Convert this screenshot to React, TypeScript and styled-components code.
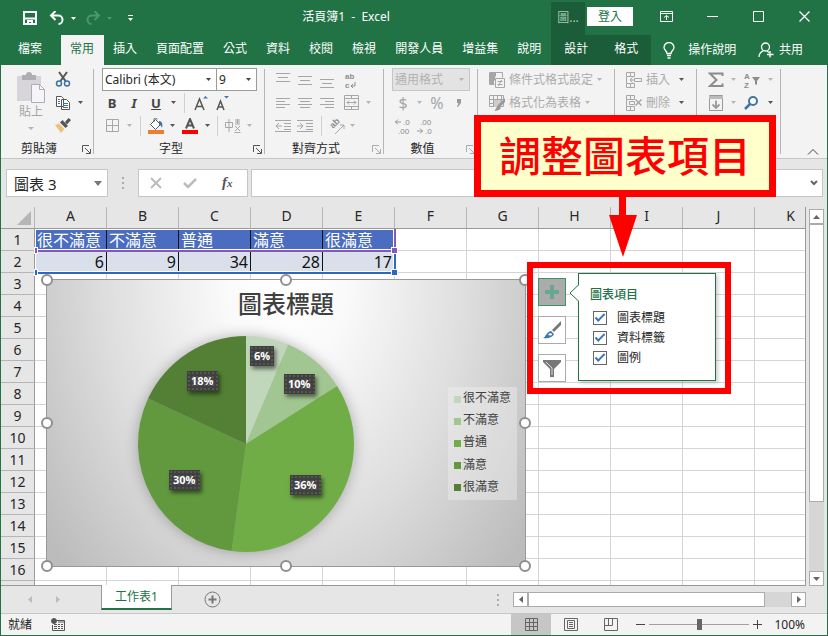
import React from "react";
import styled, { createGlobalStyle, css } from "styled-components";

const GREEN = "#217346";
const DARK_GREEN = "#1b5c39";
const UI_FONT = `"Noto Sans", "Noto Sans CJK TC", sans-serif`;

const GlobalStyle = createGlobalStyle`
  *, *::before, *::after { box-sizing: border-box; }
  html, body, #root { height: 100%; }
  body { margin: 0; font-family: ${UI_FONT}; font-size: 12px; line-height: 16px; color: #262626; }
  button, input, select { font: inherit; color: inherit; margin: 0; padding: 0; }
  button { border: 0; background: none; cursor: default; white-space: nowrap; }
  svg { display: block; flex: none; }
`;

/* ---------- window ---------- */

const Window = styled.div`
  position: relative;
  display: flex;
  flex-direction: column;
  height: 100vh;
  min-height: 420px;
  overflow: hidden;
  background: #e6e6e6;
  border: 1px solid ${GREEN};
  border-top: 0;
`;

const TitleBar = styled.header`
  display: flex;
  flex: none;
  height: 35px;
  background: ${GREEN};
  color: #fff;
`;

const QuickAccess = styled.div`
  display: flex;
  align-items: center;
  width: 140px;
  padding-left: 18px;
`;

const Title = styled.h1`
  flex: 1;
  margin: 0;
  font-size: 12px;
  line-height: 33px;
  font-weight: 400;
  text-align: center;
  white-space: pre;
`;

const ContextTitle = styled.div`
  width: 34px;
  margin-top: 2px;
  background: ${DARK_GREEN};
  color: #a5cdb5;
  line-height: 32px;
  text-align: center;
`;

const SignIn = styled.button`
  align-self: center;
  width: 46px;
  height: 19px;
  margin: 0 10px 2px 2px;
  background: #fff;
  color: ${GREEN};
`;

const WindowButton = styled.button`
  display: grid;
  place-items: center;
  width: 46px;
  height: 32px;
`;

const TabStrip = styled.nav`
  display: flex;
  flex: none;
  height: 30px;
  background: ${GREEN};
  color: #fff;
`;

const RibbonTab = styled.button<{ $kind?: "file" | "active" | "context" }>`
  height: 30px;
  padding: 0 10px 2px 9px;
  ${(p) => p.$kind === "file" && css`padding: 0 19px 2px 17px;`}
  ${(p) => p.$kind === "active" && css`background: #f3f3f3; color: ${GREEN};`}
  ${(p) => p.$kind === "context" && css`background: ${DARK_GREEN}; padding: 0 13px 2px;`}
`;

const TabAction = styled.button`
  display: flex;
  align-items: center;
  gap: 5px;
  height: 30px;
`;

const TellMe = styled(TabAction)`
  gap: 13px;
  margin-left: 12px;
`;

const Share = styled(TabAction)`
  margin: 0 24px 0 auto;
`;

/* ---------- ribbon ---------- */

const Ribbon = styled.section`
  display: flex;
  flex: none;
  height: 94px;
  background: #f3f3f3;
  border-bottom: 1px solid #c6c6c6;
`;

const Group = styled.section<{ $w: number }>`
  position: relative;
  display: grid;
  grid-template-rows: 23px 23px 23px 1fr;
  flex: none;
  width: ${(p) => p.$w}px;
  padding-top: 3px;
  &::after {
    content: "";
    position: absolute;
    right: 0;
    top: 4px;
    bottom: 4px;
    width: 1px;
    background: #b5b5b5;
  }
`;

const Row = styled.div<{ $pad?: number }>`
  display: flex;
  align-items: center;
  padding-left: ${(p) => p.$pad ?? 0}px;
`;

const GroupFooter = styled.div`
  grid-row: 4;
  display: flex;
  align-items: center;
  padding: 3px 3px 0 0;
`;

const GroupName = styled.h2`
  flex: 1;
  margin: 0 5px 0 0;
  font-size: 12px;
  line-height: 18px;
  font-weight: 400;
  text-align: center;
`;

const Tool = styled.button<{ $w?: number; $dim?: boolean }>`
  display: flex;
  align-items: center;
  justify-content: center;
  flex: none;
  width: ${(p) => p.$w ?? 22}px;
  height: 22px;
  color: ${(p) => (p.$dim ? "#a6a6a6" : "#444")};
`;

const Glyph = styled(Tool)<{ $bold?: boolean; $italic?: boolean; $under?: boolean }>`
  font-size: 13px;
  line-height: 16px;
  font-weight: ${(p) => (p.$bold ? 700 : 400)};
  font-style: ${(p) => (p.$italic ? "italic" : "normal")};
  text-decoration: ${(p) => (p.$under ? "underline" : "none")};
`;

const NumberGlyph = styled(Tool)`
  font-size: 16px;
`;

const Separator = styled.span`
  flex: none;
  width: 1px;
  height: 20px;
  margin: 0 5px;
  background: #d0d0d0;
`;

const Clipboard = styled.div`
  grid-row: 1 / 4;
  display: flex;
`;

const PasteButton = styled.button`
  display: flex;
  flex-direction: column;
  align-items: center;
  width: 34px;
  margin: 4px 4px 0 13px;
  color: #a6a6a6;
`;

const ClipboardTools = styled.div`
  display: grid;
  grid-template-rows: repeat(3, 23px);
`;

const Combo = styled.label<{ $w: number; $dim?: boolean }>`
  position: relative;
  display: flex;
  align-items: center;
  flex: none;
  width: ${(p) => p.$w}px;
  height: 23px;
  border: 1px solid ${(p) => (p.$dim ? "#c6c6c6" : "#9a9a9a")};
  background: ${(p) => (p.$dim ? "#e3e3e3" : "#fff")};
  color: ${(p) => (p.$dim ? "#b1b1b1" : "#262626")};
  & + & { margin-left: -1px; }
  > svg { position: absolute; right: 5px; pointer-events: none; }
`;

const ComboSelect = styled.select`
  appearance: none;
  width: 100%;
  height: 100%;
  padding-left: 2px;
  border: 0;
  background: transparent;
`;

const TextTool = styled.button`
  display: flex;
  align-items: center;
  gap: 4px;
  height: 22px;
  color: #ababab;
`;

const Collapse = styled.button`
  align-self: flex-end;
  margin: 0 8px 2px auto;
`;

/* ---------- formula bar ---------- */

const FormulaBar = styled.section`
  display: flex;
  align-items: center;
  flex: none;
  height: 48px;
  padding: 0 4px 0 5px;
`;

const NameBox = styled.label`
  position: relative;
  display: flex;
  align-items: center;
  width: 102px;
  height: 28px;
  border: 1px solid #c6c6c6;
  background: #fff;
  > svg { position: absolute; right: 5px; }
`;

const NameInput = styled.input`
  width: 100%;
  height: 26px;
  padding-left: 7px;
  border: 0;
  background: transparent;
  font-size: 15px;
`;

const Grip = styled.span`
  display: grid;
  place-items: center;
  width: 30px;
`;

const FormulaButtons = styled.div`
  display: flex;
  align-items: center;
  justify-content: space-around;
  width: 110px;
  height: 28px;
  margin-right: 3px;
  border: 1px solid #c6c6c6;
  background: #fff;
`;

const FormulaField = styled.label`
  display: flex;
  align-items: center;
  flex: 1;
  height: 28px;
  padding-right: 4px;
  border: 1px solid #c6c6c6;
  background: #fff;
`;

const FormulaInput = styled.input`
  flex: 1;
  min-width: 0;
  border: 0;
  background: transparent;
`;

/* ---------- sheet ---------- */

const SheetArea = styled.main`
  display: flex;
  flex: 1;
  min-height: 0;
`;

const SheetFrame = styled.div`
  position: relative;
  flex: 1;
  min-width: 0;
  overflow: hidden;
  background: #fff;
  border: solid #999;
  border-width: 0 1px 1px 0;
`;

const Grid = styled.table`
  table-layout: fixed;
  width: 826px;
  border-spacing: 0;
  font-size: 16px;
  line-height: 20px;
`;

const ColHead = styled.th`
  height: 22px;
  padding: 0;
  background: #e6e6e6;
  border-right: 1px solid #b5b5b5;
  border-bottom: 1px solid #999;
  font-size: 14px;
  line-height: 18px;
  font-weight: 400;
  vertical-align: top;
`;

const Corner = styled(ColHead)`
  > svg { margin: 4px 3px 0 auto; }
`;

const RowHead = styled.th`
  height: 22px;
  padding: 1px 0 0;
  background: #e6e6e6;
  border-right: 1px solid #999;
  border-bottom: 1px solid #b5b5b5;
  font-size: 14px;
  line-height: 20px;
  font-weight: 400;
`;

const Cell = styled.td<{ $kind?: "label" | "value" }>`
  height: 22px;
  padding: 1px 2px 0;
  overflow: hidden;
  white-space: nowrap;
  border-right: 1px solid #d4d4d4;
  border-bottom: 1px solid #d4d4d4;
  ${(p) => p.$kind && css`border-right-color: #111;`}
  ${(p) => p.$kind === "label" && css`background: #4a6cc1; color: #fff;`}
  ${(p) => p.$kind === "value" && css`background: #dae0eb; color: #111; text-align: right;`}
`;

const RangeOutline = styled.div<{ $color: string; $top: number }>`
  position: absolute;
  left: 34px;
  top: ${(p) => p.$top}px;
  width: 361px;
  height: 23px;
  border: solid ${(p) => p.$color};
  border-width: 0 2px 2px 0;
  box-shadow: inset -1px -1px #fff, inset 1px 1px #fff;
  &::before, &::after {
    content: "";
    position: absolute;
    bottom: -3px;
    width: 5px;
    height: 5px;
    background: ${(p) => p.$color};
    outline: 1px solid #fff;
  }
  &::before { left: 0; width: 2px; }
  &::after { right: -3px; }
`;

const Chart = styled.figure`
  position: absolute;
  left: 45px;
  top: 72px;
  width: 480px;
  height: 288px;
  margin: 0;
  border: 1px solid #999;
  background: radial-gradient(ellipse 300px 420px at 50% 0, #fff 0, #fafafa 20%, #dedede 60%, #c6c6c6 88%, #bcbcbc 100%);
  color: #404040;
`;

const ChartTitle = styled.figcaption`
  padding-top: 8px;
  font-size: 24px;
  line-height: 32px;
  font-weight: 500;
  text-align: center;
`;

const PlotArea = styled.svg`
  position: absolute;
  left: 75px;
  top: 39px;
  overflow: visible;
  filter: drop-shadow(0 0 7px rgba(0, 0, 0, 0.28));
`;

const DataLabel = styled.span<{ $x: number; $y: number }>`
  position: absolute;
  left: ${(p) => p.$x}px;
  top: ${(p) => p.$y}px;
  padding: 0 4px;
  background: radial-gradient(#565656 1px, transparent 1px) 0 0 / 4px 4px #404040;
  box-shadow: 2px 3px 4px rgba(0, 0, 0, 0.5);
  color: #fff;
  font-family: "Open Sans", sans-serif;
  font-size: 11px;
  line-height: 20px;
  font-weight: 700;
`;

const Legend = styled.ul`
  position: absolute;
  right: 8px;
  top: 107px;
  display: grid;
  grid-auto-rows: 1fr;
  width: 69px;
  height: 113px;
  margin: 0;
  padding: 0 0 2px 6px;
  list-style: none;
  background: rgba(242, 242, 242, 0.4);
`;

const LegendItem = styled.li<{ $color: string }>`
  display: flex;
  align-items: center;
  gap: 2px;
  white-space: nowrap;
  &::before {
    content: "";
    width: 7px;
    height: 7px;
    margin-top: 2px;
    background: ${(p) => p.$color};
  }
`;

const Handle = styled.span<{ $x: string; $y: string }>`
  position: absolute;
  left: ${(p) => p.$x};
  top: ${(p) => p.$y};
  width: 12px;
  height: 12px;
  margin: -6px;
  border: 2px solid #8f8f8f;
  border-radius: 50%;
  background: #fff;
`;

const ChartButtons = styled.div`
  position: absolute;
  left: 537px;
  top: 71px;
  display: grid;
  gap: 10px;
`;

const ChartButton = styled.button<{ $on?: boolean }>`
  display: grid;
  place-items: center;
  width: 28px;
  height: 28px;
  border: 1px solid ${(p) => (p.$on ? "#3b9464" : "#ababab")};
  background: ${(p) => (p.$on ? "#ababab" : "#fff")};
`;

const Popup = styled.fieldset`
  position: absolute;
  left: 577px;
  top: 66px;
  width: 138px;
  height: 108px;
  margin: 0;
  padding: 13px 11px;
  border: 1px solid ${GREEN};
  background: #fff;
  box-shadow: 2px 2px 4px rgba(0, 0, 0, 0.2);
  > svg { position: absolute; left: -10px; top: 9px; }
`;

const PopupTitle = styled.strong`
  display: block;
  margin-bottom: 5px;
  color: ${GREEN};
  line-height: 16px;
  font-weight: 500;
`;

const CheckRow = styled.label`
  display: flex;
  align-items: center;
  gap: 10px;
  height: 20px;
  padding-left: 3px;
`;

const CheckBox = styled.input`
  appearance: none;
  display: grid;
  place-items: center;
  width: 14px;
  height: 14px;
  border: 1px solid #666;
  background: #fff;
  &:checked::before {
    content: "";
    width: 10px;
    height: 5px;
    margin-top: -3px;
    border: solid #3f74b5;
    border-width: 0 0 2px 2px;
    transform: rotate(-45deg);
  }
`;

/* ---------- scroll bars ---------- */

const VScroll = styled.div`
  display: flex;
  flex-direction: column;
  flex: none;
  width: 15px;
  margin: 2px 3px 0;
  background: #d6d6d6;
`;

const HScroll = styled.div`
  display: flex;
  width: 293px;
  height: 15px;
  background: #d6d6d6;
`;

const ScrollButton = styled.button`
  display: grid;
  place-items: center;
  flex: none;
  width: 15px;
  height: 15px;
  border: 1px solid #ababab;
  background: #fff;
`;

const Thumb = styled.div<{ $grow: number }>`
  flex: 0 0 ${(p) => p.$grow}%;
  border: 1px solid #ababab;
  background: #fff;
`;

const ThumbTrack = styled.div<{ $vertical?: boolean }>`
  display: flex;
  flex: 1;
  flex-direction: ${(p) => (p.$vertical ? "column" : "row")};
`;

/* ---------- bottom bars ---------- */

const SheetTabs = styled.nav`
  display: flex;
  align-items: center;
  flex: none;
  height: 27px;
  padding-right: 21px;
`;

const SheetNav = styled.div`
  display: flex;
  width: 100px;
  padding-left: 15px;
`;

const SheetTab = styled.button`
  position: relative;
  align-self: flex-start;
  width: 71px;
  height: 25px;
  margin-top: -1px;
  border: solid #999;
  border-width: 0 1px;
  border-bottom: 2px solid ${GREEN};
  background: #fff;
  color: ${GREEN};
`;

const AddSheet = styled.button`
  margin-left: 32px;
`;

const TabGrip = styled(Grip)`
  margin-left: auto;
`;

const StatusBar = styled.footer`
  display: flex;
  align-items: center;
  flex: none;
  height: 22px;
  padding: 0 22px 0 7px;
  border-top: 1px solid #c6c6c6;
  background: #f3f3f3;
`;

const StatusText = styled.span`
  margin-right: 19px;
`;

const ViewButtons = styled.div`
  display: flex;
  align-self: stretch;
  margin: 0 5px 0 auto;
`;

const ViewButton = styled.button<{ $on?: boolean }>`
  display: grid;
  place-items: center;
  width: 40px;
  background: ${(p) => (p.$on ? "#c6c6c6" : "none")};
`;

const ZoomSlider = styled.input`
  appearance: none;
  width: 100px;
  height: 12px;
  margin: 0 4px;
  background: linear-gradient(#a0a0a0, #a0a0a0) center / 100% 1px no-repeat;
  &::-webkit-slider-thumb {
    appearance: none;
    width: 5px;
    height: 11px;
    background: #666;
  }
`;

const ZoomValue = styled.button`
  width: 43px;
  text-align: right;
`;

/* ---------- annotations ---------- */

const Callout = styled.div`
  position: absolute;
  left: 473px;
  top: 115px;
  padding: 0 18px;
  border: 7px solid #f00;
  background: #ffc;
  color: #f00;
  font-size: 42px;
  line-height: 68px;
  font-weight: 500;
  white-space: nowrap;
`;

const CalloutArrow = styled.svg`
  position: absolute;
  left: 607px;
  top: 196px;
`;

const Highlight = styled.div`
  position: absolute;
  left: 526px;
  top: 262px;
  width: 204px;
  height: 132px;
  border: 6px solid #f00;
  pointer-events: none;
`;

/* ---------- icons ---------- */

type IconProps = { w?: number; h?: number; c?: string; sw?: number; children: React.ReactNode };

const Icon = ({ w = 16, h = 16, c = "#a6a6a6", sw = 1, children }: IconProps) => (
  <svg width={w} height={h} viewBox={`0 0 ${w} ${h}`} fill="none" stroke={c} strokeWidth={sw} aria-hidden="true">
    {children}
  </svg>
);

const LetterIcon = ({ size = 8, bold, children }: { size?: number; bold?: boolean; children: React.ReactNode }) => (
  <svg
    width="20"
    height="20"
    viewBox="0 0 20 20"
    fill="#8c8c8c"
    fontFamily="Liberation Sans"
    fontSize={size}
    fontWeight={bold ? 700 : 400}
    aria-hidden="true"
  >
    {children}
  </svg>
);

const Caret = ({ c = "#666" }: { c?: string }) => (
  <svg width="5" height="3" viewBox="0 0 5 3" aria-hidden="true">
    <path d="M0 0h5L2.5 3z" fill={c} />
  </svg>
);

const Drop = ({ w = 12, dim }: { w?: number; dim?: boolean }) => (
  <Tool $w={w} aria-label="更多">
    <Caret c={dim ? "#b5b5b5" : "#555"} />
  </Tool>
);

const Launcher = ({ dim }: { dim?: boolean }) => (
  <button aria-label="對話方塊">
    <Icon w={9} h={9} c={dim ? "#ababab" : "#555"}>
      <path d="M.5 7V.5H7M3 3l5 5M8.500 4v4.500H4" />
    </Icon>
  </button>
);

const Lines = ({ rows, w = 14 }: { rows: [number, number, number][]; w?: number }) => (
  <Icon w={w} h={16}>
    {rows.map(([y, a, b]) => (
      <path key={y} d={`M${a} ${y + 0.5}H${b}`} />
    ))}
  </Icon>
);

const Dots = () => (
  <Icon w={3} h={12} c="none">
    <path d="M0 0h2v2H0zM0 5h2v2H0zM0 10h2v2H0z" fill="#ababab" />
  </Icon>
);

const TableIcon = () => (
  <path d="M.5.5h4v4h-4zM4.500.5h4v4h-4zM.5 11.500h4v4h-4zM4.500 11.500h4v4h-4zM.5 4.500v7" />
);

/* ---------- data ---------- */

const columns = ["A", "B", "C", "D", "E", "F", "G", "H", "I", "J", "K"];
const series = [
  { name: "很不滿意", value: 6, color: "#c1d7bb", label: "6%", x: 203, y: 66 },
  { name: "不滿意", value: 9, color: "#a2c691", label: "10%", x: 237, y: 94 },
  { name: "普通", value: 34, color: "#70ad47", label: "36%", x: 243, y: 195 },
  { name: "滿意", value: 28, color: "#62993e", label: "30%", x: 122, y: 190 },
  { name: "很滿意", value: 17, color: "#538034", label: "18%", x: 140, y: 91 },
];
const rows = Array.from({ length: 17 }, (_, i) => i + 1);
const total = series.reduce((sum, s) => sum + s.value, 0);

const slices = series.map((s, i) => {
  const before = series.slice(0, i).reduce((sum, p) => sum + p.value, 0);
  const point = (v: number) => {
    const a = (v / total) * Math.PI * 2;
    return `${124 + 108 * Math.sin(a)} ${125 - 108 * Math.cos(a)}`;
  };
  return {
    color: s.color,
    d: `M124 125L${point(before)}A108 108 0 0 1 ${point(before + s.value)}Z`,
  };
});

const mainTabs = ["插入", "頁面配置", "公式", "資料", "校閱", "檢視", "開發人員", "增益集", "說明"];
const chartElements = ["圖表標題", "資料標籤", "圖例"];

/* ---------- sections ---------- */

const Header = () => (
  <>
    <TitleBar>
      <QuickAccess>
        <Tool aria-label="儲存檔案">
          <Icon w={14} h={14} c="#fff" sw={2}>
            <path d="M1 1h12v12H1zM1 7.500h12M5 13v-3h4v3" />
          </Icon>
        </Tool>
        <Tool $w={43} aria-label="復原">
          <Icon w={16} h={14} c="#fff" sw={2}>
            <path d="M6.500 0L2 4.500 6.500 9M2 4.500h7a4.200 4.200 0 0 1 .5 8.500" />
          </Icon>
          <Icon w={12} h={14}><path d="M6 6h5L8.500 9z" fill="#fff" stroke="none" /></Icon>
        </Tool>
        <Tool $w={30} aria-label="取消復原">
          <Icon w={16} h={14} c="#4f9470" sw={2}>
            <path d="M9.500 0L14 4.500 9.500 9M14 4.500H7A4.200 4.200 0 0 0 6.500 13" />
          </Icon>
          <Icon w={12} h={14}><path d="M6 6h5L8.500 9z" fill="#4f9470" stroke="none" /></Icon>
        </Tool>
        <Tool $w={32} aria-label="自訂快速存取工具列">
          <Icon w={5} h={8} c="#fff"><path d="M0 1.500h5" /><path d="M0 4h5L2.500 7z" fill="#fff" stroke="none" /></Icon>
        </Tool>
      </QuickAccess>
      <Title>{"活頁簿1  -  Excel"}</Title>
      <ContextTitle>圖...</ContextTitle>
      <SignIn>登入</SignIn>
      <WindowButton aria-label="功能區顯示選項">
        <Icon w={13} h={11} c="#fff"><path d="M.5.5h12v10H.5zM.5 2.500h12M6.500 9V4.500M4 6.500l2.500-2 2.500 2" /></Icon>
      </WindowButton>
      <WindowButton aria-label="最小化"><Icon w={11} h={11} c="#fff"><path d="M0 5.500h11" /></Icon></WindowButton>
      <WindowButton aria-label="最大化"><Icon w={11} h={11} c="#fff"><path d="M.5.5h10v10H.5z" /></Icon></WindowButton>
      <WindowButton aria-label="關閉"><Icon w={11} h={11} c="#fff" sw={1.3}><path d="M.5.5l10 10M10.500.5l-10 10" /></Icon></WindowButton>
    </TitleBar>
    <TabStrip>
      <RibbonTab $kind="file">檔案</RibbonTab>
      <RibbonTab $kind="active">常用</RibbonTab>
      {mainTabs.map((t) => <RibbonTab key={t}>{t}</RibbonTab>)}
      <RibbonTab $kind="context">設計</RibbonTab>
      <RibbonTab $kind="context">格式</RibbonTab>
      <TellMe>
        <Icon w={12} h={17} c="#fff" sw={1.3}>
          <path d="M4 11.500C4 9 1 8 1 5.500a5 5 0 0 1 10 0C11 8 8 9 8 11.500zM4 13.500h4M4.500 16h3" />
        </Icon>
        操作說明
      </TellMe>
      <Share>
        <Icon w={16} h={16} c="#fff" sw={1.3}>
          <circle cx="7.500" cy="5" r="4" /><path d="M1 15c0-4 2-5.500 5-6.500M9 9l2 1.500M12 9v6.500M9 12.500h6.500" />
        </Icon>
        共用
      </Share>
    </TabStrip>
  </>
);

const Toolbar = () => (
  <Ribbon>
    <Group $w={93}>
      <Clipboard>
        <PasteButton>
          <Icon w={28} h={32} c="none">
            <path d="M0 4h24v25H0z" fill="#d8d5da" />
            <path d="M5 3h4a3 3 0 0 1 6 0h4v5H5z" fill="#b0aeb2" />
            <path d="M14.500 12.500h8l5 5v13h-13z" fill="#f6f4f8" stroke="#b0aeb2" />
            <path d="M22.500 12.500v5h5" stroke="#b0aeb2" />
          </Icon>
          貼上
          <Icon w={6} h={11}><path d="M0 7h6L3 10z" fill="#b5b5b5" stroke="none" /></Icon>
        </PasteButton>
        <ClipboardTools>
          <Tool aria-label="剪下">
            <Icon c="#555" sw={2}>
              <path d="M4 1l6.500 9M12 1L5.500 10" />
              <g stroke="#3f74a8" strokeWidth="1.500"><circle cx="4" cy="12.500" r="2.500" /><circle cx="12" cy="12.500" r="2.500" /></g>
            </Icon>
          </Tool>
          <Row>
            <Tool aria-label="複製">
              <Icon c="#555">
                <path d="M1.500 1.500h5l2 2v8h-7zM6.500 4.500h5l3 3v7h-8z" fill="#fff" />
                <path d="M3 4.500h2M3 6.500h2M3 8.500h2M8 8.500h5M8 10.500h5M8 12.500h5" stroke="#3f74a8" />
              </Icon>
            </Tool>
            <Drop />
          </Row>
          <Tool aria-label="複製格式">
            <Icon c="none">
              <path d="M0 8l4-1.500L9.500 12 6 16z" fill="#e9c37d" /><path d="M5 5.500L10.500 11l2.500-2-5.500-6z" fill="#555" /><path d="M10 5l3.500-4L16 3l-4 4.500z" fill="#555" />
            </Icon>
          </Tool>
        </ClipboardTools>
      </Clipboard>
      <GroupFooter><GroupName>剪貼簿</GroupName><Launcher /></GroupFooter>
    </Group>

    <Group $w={171}>
      <Row $pad={8}>
        <Combo $w={115}>
          <ComboSelect aria-label="字型"><option>Calibri (本文)</option></ComboSelect><Caret c="#444" />
        </Combo>
        <Combo $w={41}>
          <ComboSelect aria-label="字型大小"><option>9</option></ComboSelect><Caret c="#444" />
        </Combo>
      </Row>
      <Row $pad={7}>
        <Glyph $bold>B</Glyph><Glyph $bold $italic>I</Glyph><Glyph $bold $under>U</Glyph><Drop />
        <Separator />
        <Tool aria-label="放大字型"><Icon c="#555" sw={1.5}><path d="M2 15L6.500 4 11 15M4 11.500h5" /><path d="M10 3.500L12.500 1 15 3.500z" fill="#3f74b5" stroke="none" /></Icon></Tool>
        <Tool aria-label="縮小字型"><Icon c="#555" sw={1.5}><path d="M2 15l3.500-9L9 15M3.500 12h4" /><path d="M9 1h5l-2.500 2.500z" fill="#3f74b5" stroke="none" /></Icon></Tool>
      </Row>
      <Row $pad={7}>
        <Tool aria-label="框線"><Icon w={13} h={13}><path d="M.5.5h12v12H.5zM6.500 0v13M0 6.500h13" /></Icon></Tool>
        <Drop dim />
        <Separator />
        <Tool $w={20} aria-label="填滿色彩">
          <Icon c="#555"><path d="M2.500 6.500l5-5 5 5-5 5zM6 4V1.500a1.500 1.500 0 0 1 3 0" fill="#fff" /><path d="M11 3c3 0 4 3 3 7-1-3-2-3-3-3z" fill="#3f74a8" stroke="none" /><path d="M0 12h16v4H0z" fill="#ed7d31" stroke="none" /></Icon>
        </Tool>
        <Drop />
        <Tool $w={24} aria-label="字型色彩">
          <Icon c="#555" sw={2}><path d="M4 10.500L8 1l4 9.500M5.500 7.500h5" /><path d="M0 12h16v4H0z" fill="#f00" stroke="none" /></Icon>
        </Tool>
        <Drop w={10} />
        <Separator />
        <Tool $w={20} aria-label="注音標示">
          <Icon><path d="M.5 4.500h7v5h-7zM4 1v13M10 2h5M12.500 1v5M10 4h5M10 6h5M10 8l5 5M15 8l-5 5M9.500 14.500h6" /></Icon>
        </Tool>
        <Drop dim />
      </Row>
      <GroupFooter><GroupName>字型</GroupName><Launcher /></GroupFooter>
    </Group>

    <Group $w={119}>
      <Row $pad={7}>
        <Tool aria-label="靠上對齊"><Lines rows={[[1, 0, 14], [5, 2, 12], [9, 0, 14]]} /></Tool>
        <Tool aria-label="置中對齊"><Lines rows={[[4, 0, 14], [8, 2, 12], [12, 0, 14]]} /></Tool>
        <Tool aria-label="靠下對齊"><Lines rows={[[7, 0, 14], [11, 2, 12], [15, 0, 14]]} /></Tool>
        <Tool $w={26} aria-label="自動換列">
          <LetterIcon bold>
            <text x="4" y="9">ab</text><text x="4" y="18">c</text>
            <path d="M14 12v4h-4M12 14l-2 2 2 2" fill="none" stroke="#8c8c8c" />
          </LetterIcon>
        </Tool>
      </Row>
      <Row $pad={7}>
        <Tool aria-label="靠左"><Lines rows={[[3, 0, 14], [6, 0, 9], [9, 0, 14], [12, 0, 9]]} /></Tool>
        <Tool aria-label="置中"><Lines rows={[[3, 0, 14], [6, 2, 12], [9, 0, 14], [12, 2, 12]]} /></Tool>
        <Tool aria-label="靠右"><Lines rows={[[3, 0, 14], [6, 5, 14], [9, 0, 14], [12, 5, 14]]} /></Tool>
        <Tool $w={26} aria-label="跨欄置中"><Icon w={15} h={15}><path d="M.5.5h14v14H.5zM.5 3.500h14M.5 11.500h14M7.500 0v3.500M7.500 11.500V15M3 7.500h9M5 5.500l-2 2 2 2M10 5.500l2 2-2 2" /></Icon></Tool>
        <Drop w={8} dim />
      </Row>
      <Row $pad={7}>
        <Tool aria-label="減少縮排"><Icon><path d="M0 2.500h16M9 5.500h7M9 8.500h7M9 11.500h7M0 13.500h16M1 8h6M4 5L1 8l3 3" /></Icon></Tool>
        <Tool aria-label="增加縮排"><Icon><path d="M0 2.500h16M9 5.500h7M9 8.500h7M9 11.500h7M0 13.500h16M0 8h6M3 5l3 3-3 3" /></Icon></Tool>
        <Separator />
        <Tool $w={20} aria-label="方向">
          <LetterIcon size={9} bold>
            <text transform="translate(6 13) rotate(-45)">ab</text>
            <path d="M8 18l9-9M13 9h4v4" fill="none" stroke="#a6a6a6" />
          </LetterIcon>
        </Tool>
        <Drop w={10} dim />
      </Row>
      <GroupFooter><GroupName>對齊方式</GroupName><Launcher dim /></GroupFooter>
    </Group>

    <Group $w={94}>
      <Row $pad={8}>
        <Combo $w={78} $dim>
          <ComboSelect aria-label="數值格式"><option>通用格式</option></ComboSelect><Caret c="#b5b5b5" />
        </Combo>
      </Row>
      <Row $pad={9}>
        <NumberGlyph $w={20} $dim>$</NumberGlyph><Drop dim /><NumberGlyph $w={24} $dim>%</NumberGlyph>
        <Tool $w={20} $dim aria-label="千分位樣式"><Icon w={6} h={8}><path d="M1 0h4v4L2 8H1l1.500-4H1z" fill="#999" stroke="none" /></Icon></Tool>
      </Row>
      <Row $pad={8}>
        <Tool aria-label="增加小數位數">
          <LetterIcon>
            <text x="10" y="9">.0</text><text x="5" y="18">.00</text><path d="M2 6h6M5 3.500L2.500 6 5 8.500" fill="none" stroke="#999" />
          </LetterIcon>
        </Tool>
        <Tool aria-label="減少小數位數">
          <LetterIcon>
            <text x="5" y="9">.00</text><text x="10" y="18">.0</text><path d="M2 15h6M5 12.500L7.500 15 5 17.500" fill="none" stroke="#999" />
          </LetterIcon>
        </Tool>
      </Row>
      <GroupFooter><GroupName>數值</GroupName><Launcher dim /></GroupFooter>
    </Group>

    <Group $w={137}>
      <Row $pad={11}>
        <TextTool>
          <Icon><path d="M.5.5h13v5M.5.5v12h5M.5 4.500h6M.5 8.500h5M4.500 0v12" /><path d="M1 1h6v3H1zM1 5h5v3H1zM1 9h3v3H1z" fill="#a6a6a6" stroke="none" /><path d="M6.500 6.500h9v9h-9zM8.500 9.500h5M8.500 12.500h5M12.500 8l-3 6" /></Icon>
          條件式格式設定<Caret c="#b5b5b5" />
        </TextTool>
      </Row>
      <Row $pad={11}>
        <TextTool>
          <Icon><path d="M.5.5h14v11H.5zM.5 4.500h14M.5 8.500h14M4.500 0v12M8.500 0v12M12.500 0v8" /><path d="M5 5h7v3L8 12H5z" fill="#ccc" stroke="none" /><path d="M16 3v4l-5 5-2-2zM9 10l3 3c-1 2-4 3-7 3 2-1 2-4 4-6z" fill="#999" stroke="none" /></Icon>
          格式化為表格<Caret c="#b5b5b5" />
        </TextTool>
      </Row>
    </Group>

    <Group $w={82}>
      <Row $pad={11}>
        <TextTool><Icon><TableIcon /><path d="M4 8h5M6.500 5.500L4 8l2.500 2.500" /><path d="M8.500 6.500h7v3h-7z" /></Icon>插入</TextTool>
        <Drop w={22} />
      </Row>
      <Row $pad={11}>
        <TextTool><Icon><TableIcon /><path d="M3.500 6.500h5v3h-5z" /><path d="M9.500 4.500l6 6M15.500 4.500l-6 6" strokeWidth="1.500" /></Icon>刪除</TextTool>
        <Drop w={22} />
      </Row>
    </Group>

    <Group $w={84}>
      <Row $pad={8}>
        <Tool aria-label="自動加總"><Icon c="#8c8c8c" sw={2}><path d="M14.500 4V1.500H2L8.500 8 2 14h12.500v-2.500" /></Icon></Tool>
        <Drop dim />
        <Tool $w={26} aria-label="排序與篩選">
          <LetterIcon bold>
            <text x="2" y="9">A</text><text x="2" y="18">Z</text><path d="M10 7h8l-3 4v4l-2-1v-3z" />
          </LetterIcon>
        </Tool>
        <Drop dim w={10} />
      </Row>
      <Row $pad={8}>
        <Tool aria-label="填滿"><Icon c="#999"><path d="M1.500.5h13v15h-13z" /><path d="M1 1h14v3H1z" fill="#bbb" stroke="none" /><path d="M8 5.500V13M4.500 9.500L8 13l3.500-3.500" strokeWidth="1.800" /></Icon></Tool>
        <Drop dim />
        <Tool $w={26} aria-label="尋找與選取"><Icon c="#3f74a8" sw={2}><circle cx="9" cy="6" r="4" fill="#fff" /><path d="M6 9l-5 5" strokeWidth="2.500" /></Icon></Tool>
        <Drop w={10} />
      </Row>
    </Group>
    <Collapse aria-label="摺疊功能區"><Icon w={12} h={8} c="#444"><path d="M1 6.500l5-5 5 5" /></Icon></Collapse>
  </Ribbon>
);

const Formula = () => (
  <FormulaBar>
    <NameBox>
      <NameInput aria-label="名稱方塊" defaultValue="圖表 3" />
      <Icon w={8} h={5}><path d="M0 0h8L4 5z" fill="#777" stroke="none" /></Icon>
    </NameBox>
    <Grip><Dots /></Grip>
    <FormulaButtons>
      <button aria-label="取消"><Icon w={12} h={12} c="#bbb" sw={2}><path d="M1 1l10 10M11 1L1 11" /></Icon></button>
      <button aria-label="輸入"><Icon w={14} h={12} c="#bbb" sw={2.5}><path d="M1 6l4 4 8-8" /></Icon></button>
      <button aria-label="插入函數">
        <svg width="18" height="20" viewBox="0 0 18 20" fill="#555" fontFamily="Liberation Serif" fontStyle="italic" fontWeight="700">
          <text x="4" y="14" fontSize="15">f<tspan fontSize="11">x</tspan></text>
        </svg>
      </button>
    </FormulaButtons>
    <FormulaField>
      <FormulaInput aria-label="資料編輯列" />
      <Icon w={8} h={6} c="#666" sw={2}><path d="M1 1l3 3 3-3" /></Icon>
    </FormulaField>
  </FormulaBar>
);

const PieChart = () => (
  <Chart>
    <ChartTitle>圖表標題</ChartTitle>
    <PlotArea width="248" height="248" viewBox="0 0 248 248">
      {slices.map((s) => <path key={s.color} d={s.d} fill={s.color} />)}
    </PlotArea>
    {series.map((s) => <DataLabel key={s.name} $x={s.x} $y={s.y}>{s.label}</DataLabel>)}
    <Legend>
      {series.map((s) => <LegendItem key={s.name} $color={s.color}>{s.name}</LegendItem>)}
    </Legend>
    {["0%", "50%", "100%"].flatMap((x) =>
      ["0%", "50%", "100%"]
        .filter((y) => x !== "50%" || y !== "50%")
        .map((y) => <Handle key={x + y} $x={x} $y={y} />),
    )}
  </Chart>
);

const Sheet = () => (
  <SheetArea>
    <SheetFrame>
      <Grid>
        <colgroup>
          <col width="34" />
          {columns.map((c) => <col key={c} width="72" />)}
        </colgroup>
        <thead>
          <tr>
            <Corner aria-label="全選"><Icon w={14} h={14}><path d="M14 0v14H0z" fill="#b5b5b5" stroke="none" /></Icon></Corner>
            {columns.map((c) => <ColHead key={c}>{c}</ColHead>)}
          </tr>
        </thead>
        <tbody>
          {rows.map((r) => (
            <tr key={r}>
              <RowHead>{r}</RowHead>
              {columns.map((c, i) => {
                const item = series[i];
                if (item && r === 1) return <Cell key={c} $kind="label">{item.name}</Cell>;
                if (item && r === 2) return <Cell key={c} $kind="value">{item.value}</Cell>;
                return <Cell key={c} />;
              })}
            </tr>
          ))}
        </tbody>
      </Grid>
      <RangeOutline $color="#2f66c4" $top={44} />
      <RangeOutline $color="#8458b3" $top={22} />
      <PieChart />
      <ChartButtons>
        <ChartButton $on aria-label="圖表項目"><Icon w={14} h={14} c="#68a68f" sw={4}><path d="M7 0v14M0 7h14" /></Icon></ChartButton>
        <ChartButton aria-label="圖表樣式">
          <Icon w={18} h={18} c="none"><path d="M18 0v4l-7 7-2-2z" fill="#777" /><path d="M8 10l3 3c-1 3-6 5-11 4 3-1 3-6 8-7z" fill="#3f74b5" /><path d="M5 14c1-2 3-2 4-1s-1 2-4 1z" fill="#fff" /></Icon>
        </ChartButton>
        <ChartButton aria-label="圖表篩選"><Icon w={18} h={17} c="none"><path d="M0 0h18v2l-7 7v8H7V9L0 2z" fill="#777" /><path d="M3 2l6 6v7" stroke="#ddd" /></Icon></ChartButton>
      </ChartButtons>
      <Popup aria-label="圖表項目">
        <Icon w={10} h={20} c={GREEN}><path d="M10 1.500L1 10l9 8.500" fill="#fff" /></Icon>
        <PopupTitle>圖表項目</PopupTitle>
        {chartElements.map((name) => (
          <CheckRow key={name}><CheckBox type="checkbox" defaultChecked />{name}</CheckRow>
        ))}
      </Popup>
    </SheetFrame>
    <VScroll>
      <ScrollButton aria-label="向上捲動"><Icon w={7} h={4}><path d="M0 4h7L3.500 0z" fill="#666" stroke="none" /></Icon></ScrollButton>
      <ThumbTrack $vertical><Thumb $grow={80} /></ThumbTrack>
      <ScrollButton aria-label="向下捲動"><Icon w={7} h={4}><path d="M0 0h7L3.500 4z" fill="#666" stroke="none" /></Icon></ScrollButton>
    </VScroll>
  </SheetArea>
);

const Bottom = () => (
  <>
    <SheetTabs>
      <SheetNav>
        <Tool $w={28} aria-label="上一張工作表"><Icon w={4} h={7}><path d="M4 0v7L0 3.500z" fill="#bbb" stroke="none" /></Icon></Tool>
        <Tool $w={28} aria-label="下一張工作表"><Icon w={4} h={7}><path d="M0 0v7l4-3.500z" fill="#bbb" stroke="none" /></Icon></Tool>
      </SheetNav>
      <SheetTab>工作表1</SheetTab>
      <AddSheet aria-label="新工作表"><Icon w={17} h={17} c="#777"><circle cx="8.500" cy="8.500" r="7.500" /><path d="M8.500 4.500v8M4.500 8.500h8" strokeWidth="2" /></Icon></AddSheet>
      <TabGrip><Dots /></TabGrip>
      <HScroll>
        <ScrollButton aria-label="向左捲動"><Icon w={4} h={7}><path d="M4 0v7L0 3.500z" fill="#666" stroke="none" /></Icon></ScrollButton>
        <ThumbTrack><Thumb $grow={90} /></ThumbTrack>
        <ScrollButton aria-label="向右捲動"><Icon w={4} h={7}><path d="M0 0v7l4-3.500z" fill="#666" stroke="none" /></Icon></ScrollButton>
      </HScroll>
    </SheetTabs>
    <StatusBar>
      <StatusText>就緒</StatusText>
      <button aria-label="錄製巨集">
        <Icon w={14} h={13} c="#555"><path d="M6 2.500h7.500v10h-12V7M3 6.500h3M7 6.500h2M10 6.500h2M3 8.500h3M7 8.500h2M10 8.500h2M3 10.500h3M7 10.500h2M10 10.500h2M7 4h6" /><circle cx="3" cy="3" r="2.500" fill="#555" /></Icon>
      </button>
      <ViewButtons>
        <ViewButton $on aria-label="標準"><Icon w={13} h={13} c="#666"><path d="M.5.5h12v12H.5zM4.500 0v13M8.500 0v13M0 4.500h13M0 8.500h13" /></Icon></ViewButton>
        <ViewButton aria-label="整頁模式"><Icon w={14} h={13} c="#666"><path d="M.5.5h13v12H.5zM3.500 2.500h7v8h-7zM5 4.500h4M5 6.500h4M5 8.500h4" /></Icon></ViewButton>
        <ViewButton aria-label="分頁預覽"><Icon w={14} h={13} c="#666"><path d="M.5.5h13v12H.5zM.5 7.500h8V.5M4.500.5v7" /></Icon></ViewButton>
      </ViewButtons>
      <button aria-label="縮小"><Icon w={9} h={9} c="#444"><path d="M0 4.500h9" /></Icon></button>
      <ZoomSlider type="range" min={0} max={100} defaultValue={50} aria-label="縮放" />
      <button aria-label="放大"><Icon w={9} h={9} c="#444"><path d="M0 4.500h9M4.500 0v9" /></Icon></button>
      <ZoomValue>100%</ZoomValue>
    </StatusBar>
  </>
);

export default function App() {
  return (
    <>
      <GlobalStyle />
      <Window>
        <Header />
        <Toolbar />
        <Formula />
        <Sheet />
        <Bottom />
        <Highlight />
        <CalloutArrow width="30" height="61" viewBox="0 0 30 61">
          <path d="M11 0h7v19h11L15 61 1 19h10z" fill="#f00" />
        </CalloutArrow>
        <Callout>調整圖表項目</Callout>
      </Window>
    </>
  );
}
